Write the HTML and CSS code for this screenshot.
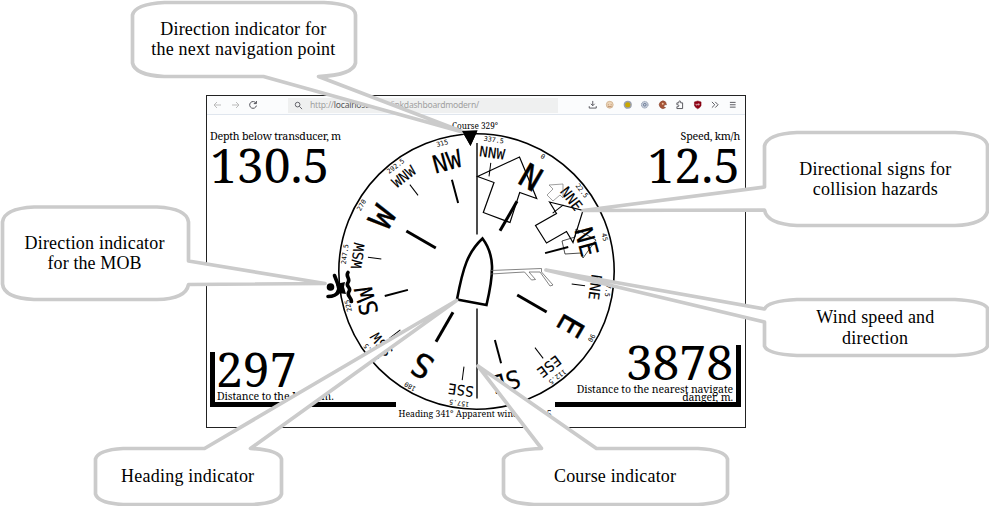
FILE: index.html
```
<!DOCTYPE html>
<html lang="en">
<head>
<meta charset="utf-8">
<title>Dashboard guide</title>
<link rel="stylesheet" href="styles.css">
</head>
<body>
<main class="figure">
  <section class="window">
    <header class="toolbar">
      <svg class="nav" viewBox="0 0 36 12"><g class="faded"><path d="M14 6H7M10 3L7 6l3 3"/><path d="M25 6h7M29 3l3 3-3 3"/></g></svg>
      <svg class="reload" viewBox="0 0 10 10"><path d="M8 3.2A3.4 3.4 0 1 0 8.4 5.6M8.4 1v2.6H5.8"/></svg>
      <div class="address">
        <svg class="search" viewBox="0 0 10 10"><circle cx="4" cy="4" r="2.6"/><path d="M6 6l3 3"/></svg>
        <span>http://<b>localhost</b>/dash/inkdashboardmodern/</span>
      </div>
      <div class="tools">
        <svg viewBox="0 0 10 10"><path d="M5 1v5M3 4l2 2 2-2M1.3 6.5v2h7.4v-2"/></svg>
        <svg viewBox="0 0 10 10"><circle cx="5" cy="5" r="3.6" fill="#ecd5b8" stroke="#d3b594"/><path d="M3 5h1M6 5h1M3 7h4" stroke="#b98a68"/></svg>
        <svg viewBox="0 0 10 10"><circle cx="5" cy="5" r="3.5" fill="#c9a800" stroke="#9a9fae" stroke-width="1.6"/></svg>
        <svg viewBox="0 0 10 10"><circle cx="5" cy="5" r="3.5" fill="#c7cedb" stroke="#8a96a9" stroke-dasharray="1.5 .7"/><circle cx="5" cy="5" r="1.4" stroke="#667791"/></svg>
        <svg viewBox="0 0 10 10"><path d="M8 2a4 4 0 1 0 0 6L6 7l1-2h2z" fill="#a65337" stroke="#804029" stroke-width=".5"/><circle cx="5" cy="4" r="1" fill="#efc4a0" stroke="none"/></svg>
        <svg viewBox="0 0 10 10"><path d="M2 3h2V2a1 1 0 0 1 2 0v1h2v6H2V7h1a1 1 0 0 0 0-2H2z"/></svg>
        <svg viewBox="0 0 10 10"><path d="M5 1l3.500 1v3.500Q8 8 5 9.300 2 8 1.500 5.500V2z" fill="#900014" stroke="#780010" stroke-width=".5"/><path d="M3.200 4v1.300h1.300V4M6.500 4H5.500v1.300h1z" stroke="#fff" stroke-width=".6"/></svg>
        <svg viewBox="0 0 10 10"><path d="M2 2l3 3-3 3M5.500 2l3 3-3 3"/></svg>
        <svg viewBox="0 0 10 10"><path d="M2 2.500h6M2 5h6M2 7.500h6"/></svg>
      </div>
    </header>
    <div class="readouts">
      <div class="readout"><span class="label">Depth below transducer, m</span><span class="value">130.5</span></div>
      <div class="readout right"><span class="label">Speed, km/h</span><span class="value">12.5</span></div>
      <div class="readout framed mob"><span class="value">297</span><span class="label">Distance to the MOB, m.</span></div>
      <div class="readout framed right danger"><span class="value">3878</span><span class="label">Distance to the nearest navigate danger, m.</span></div>
    </div>
  </section>

  <svg class="overlay" viewBox="0 0 989 506">
    <g class="caption"><text x="452" y="128.500" textLength="46" lengthAdjust="spacingAndGlyphs">Course 329°</text><text x="398.500" y="416.500" textLength="153" lengthAdjust="spacingAndGlyphs">Heading 341° Apparent wind, m/s 4.5</text></g>
    <g id="compass" transform="translate(476.5 271.500)">
      <circle r="137.700" class="ring"/>
      <path class="course" d="M.5-128.500V-37M.5 37V127"/>
    </g>
    <path class="solid" d="M462 131l15.500-.5-7 15.500z"/>
    <g class="target">
      <path d="M477.500 176.500L519.500 157l17.200 41.500-17-6-9.700 30-26.700-10L494 182.500z"/>
      <path d="M549.500 202l33.500 8.500-10 32-6.500-11-20 11.500-11-17.500 21-12z"/>
      <path class="mid" d="M562 241l13-4 1-8 20 11-13 18-2-5-16 1z"/>
      <path class="pale" d="M549 185l14-1v14l-3-3-7 6-6-6 6-6z"/>
    </g>
    <path class="boat" d="M482.500 238.500C468 252 463 267 457 299.500l29.500 5.500C494 273 495 255 482.500 238.500z"/>
    <path class="wind" d="M490.500 270.500l51-2v3.500l11.500 13-3 1-10-14h-11l6.500 7.500-4 .5-7-8-34 2z"/>
    <g class="person">
      <circle cx="330.500" cy="287" r="3.800" class="solid"/>
      <path class="solid" d="M336 284l9-2-1 5 2 7-8-1-4 3 3-7z"/>
      <path class="limb" d="M334.500 275.500l3.500 9M328 296.500c5 0 9-2 11-5"/>
      <path class="limb" d="M348 272.500c-3 4 3 6 0 10s4 5 1 9 2 5 2.500 10"/>
    </g>
    <g class="bubbles">
      <path d="M164.500 2.500H324Q355.500 4 355.500 15V63Q353 75 318.500 76.500L466 133 263.500 76.500H164Q135 75 132.500 63V15Q135 4 164.500 2.500z"/>
      <path d="M34 207H157Q187 208.500 188.500 222V261L325 283.500 188.500 284.500Q186 299 157 299.500H34Q4 298 2.500 284V222Q4 208.500 34 207z"/>
      <path d="M797 132.500H955Q986 134 987.500 146V211Q985 224 955 225.500H797Q767 224 764.500 210L583 210.500 764.500 187V146Q767 134 797 132.500z"/>
      <path d="M797 299.500H955Q983 301 987.500 308V346Q985 354 955 355.500H797Q767 354 764.500 346V322L546 270 764.500 309Q768 301 797 299.500z"/>
      <path d="M123 448.500H204.500L456.500 300.500 250.500 448.500Q279 450 281.500 459V494Q279 503 253 504.500H123Q98 503 95.500 494V459Q98 450 123 448.500z"/>
      <path d="M541.500 448.500L478 366 596.500 448.500H698Q725 450 727.500 459V494Q725 503 698 504.500H534Q506 503 503.500 494V459Q506 450 541.500 448.500z"/>
    </g>
    <path class="solid" d="M462 131l15.500-.5-7 15.500z"/>
    <g class="notes">
      <text x="243.300" y="35" textLength="166">Direction indicator for</text><text x="243.300" y="55" textLength="184">the next navigation point</text>
      <text x="94.500" y="249" textLength="140">Direction indicator</text><text x="94.500" y="269" textLength="94">for the MOB</text>
      <text x="875.300" y="175" textLength="152">Directional signs for</text><text x="875.300" y="195" textLength="125">collision hazards</text>
      <text x="875.300" y="323" textLength="118">Wind speed and</text><text x="875" y="344" textLength="66">direction</text>
      <text x="187.600" y="482" textLength="133">Heading indicator</text>
      <text x="615" y="482" textLength="122">Course indicator</text>
    </g>
  </svg>
</main>
<script src="compass.js"></script>
</body>
</html>
```
FILE: styles.css
```
body { margin: 0; background: #fff; }
.figure { position: relative; width: 989px; height: 506px; overflow: hidden; box-sizing: border-box; padding: 95px 0 0 206px; }
.window { box-sizing: border-box; width: 540px; height: 333px; border: 1px solid #222; display: flex; flex-direction: column; }
.toolbar { height: 18px; flex: none; display: flex; align-items: center; border-bottom: 1px solid #e0e6ee; background: #fbfcfd; box-sizing: content-box; }
.toolbar svg { fill: none; stroke: #55555c; stroke-width: 1; }
.nav { width: 36px; height: 12px; }
.toolbar .faded { stroke: #bbb; }
.reload { width: 10px; height: 10px; margin-left: 5px; }
.address { width: 270px; height: 15px; margin-left: 30px; background: #eff0f0; display: flex; align-items: center; font: 8.600px "Noto Sans", sans-serif; letter-spacing: -.24px; color: #a0a0a0; white-space: nowrap; }
.address b { font-weight: 400; color: #555; }
.search { width: 9px; height: 9px; margin: 0 7px 0 6px; }
.tools { flex: 1; display: flex; justify-content: space-between; padding: 0 8px 0 30px; }
.tools svg { width: 9.500px; height: 9.500px; }
.readouts { flex: 1; display: grid; grid-template-columns: 1fr 1fr; grid-template-rows: auto auto; justify-content: space-between; align-content: space-between; padding: 14px 5px 20px 3px; font-family: "Noto Serif", "Droid Serif", "DejaVu Serif Condensed", serif; color: #000; }
.readout { display: flex; flex-direction: column; }
.right { align-items: flex-end; text-align: right; }
.label { font-size: 10.700px; line-height: 15px; letter-spacing: -.24px; }
.value { font-size: 48px; line-height: 41px; }
.framed { box-sizing: border-box; align-self: end; }
.framed .label { font-size: 10.500px; letter-spacing: -.11px; }
.mob { width: 186px; height: 55px; border-left: 5px solid; border-bottom: 5px solid; padding-left: 1px; }
.mob .value { line-height: 33px; }
.mob .label { line-height: 23px; padding-left: 1px; }
.danger { width: 186px; height: 62px; border-right: 5px solid; border-bottom: 5px solid; justify-self: end; padding-right: 3px; margin-right: -1px; }
.danger .value { line-height: 34px; }
.danger .label { width: 165px; line-height: 8px; margin-top: 6px; }
.overlay { position: absolute; left: 0; top: 0; width: 989px; height: 506px; }
.overlay path, .overlay circle { fill: none; stroke: #000; }
.ring { stroke-width: 1.600; }
.course { stroke-width: 1.400; }
.overlay .solid { fill: #000; stroke: none; }
.target path { stroke-width: 1.200; }
.target .mid { stroke-width: .7; }
.target .pale { stroke: #777; stroke-width: .7; }
.overlay .boat { stroke-width: 2.600; }
.overlay .wind { stroke: #666; stroke-width: .8; }
.overlay .limb { stroke-width: 3.600; stroke-linecap: round; stroke-linejoin: round; }
.caption { font: 8.400px "Noto Serif", "Droid Serif", "DejaVu Serif Condensed", serif; }
#compass text { font-family: "DejaVu Sans Mono", monospace; text-anchor: middle; }
.overlay .bubbles path { fill: #fff; stroke: #cbcbcb; stroke-width: 3.700; stroke-linejoin: round; }
.notes { font: 18px "Liberation Serif", serif; text-anchor: middle; }
```
FILE: compass.js
```
const NS = "http://www.w3.org/2000/svg";
const dial = document.getElementById("compass");
const points = ["N", "NNE", "NE", "ENE", "E", "ESE", "SE", "SSE", "S", "SSW", "SW", "WSW", "W", "WNW", "NW", "NNW"];
const styles = {
  1: { size: 33, width: 20, base: 97, from: 47, to: 81, tick: 3 },
  2: { size: 25, width: 29, base: 105, from: 71, to: 95, tick: 2 },
  3: { size: 14.5, width: 25.5, base: 114.5, from: 96, to: 109.5, tick: 1 }
};

function add(parent, name, attrs, content) {
  const node = document.createElementNS(NS, name);
  for (const key in attrs) node.setAttribute(key, attrs[key]);
  if (content) node.textContent = content;
  parent.appendChild(node);
  return node;
}

points.forEach((name, i) => {
  const s = styles[name.length];
  const g = add(dial, "g", { transform: `rotate(${i * 22.5 + 30})` });
  const degree = String(i * 22.5);
  add(g, "text", { y: -130.5, "font-size": 6.7 }, degree);
  add(g, "text", { y: -s.base, "font-size": s.size, textLength: s.width, lengthAdjust: "spacingAndGlyphs", stroke: "#000", "stroke-width": name.length === 1 ? 0.4 : 0.1 }, name);
  add(g, "path", { d: `M0-${s.from}V-${s.to}`, "stroke-width": s.tick });
});
```
